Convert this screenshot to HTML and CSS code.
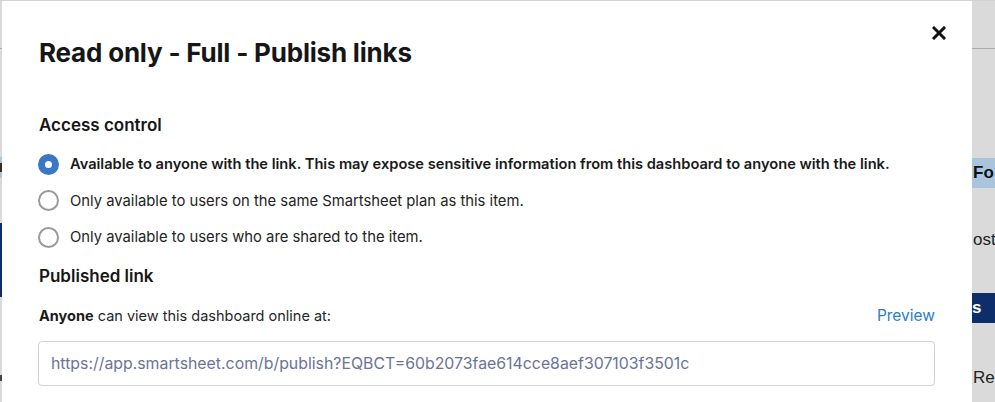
FILE: index.html
```html
<!DOCTYPE html>
<html lang="en">
<head>
<meta charset="utf-8">
<title>Publish links</title>
<link rel="stylesheet" href="styles.css">
</head>
<body>
<div class="page">
  <div class="side side-left">
    <div class="bar-top"></div>
    <div class="lb lb-left"><span class="mark"></span></div>
    <div class="navy navy-left"></div>
    <div class="dot-left"></div>
  </div>
  <div class="modal">
    <div class="modal-head">
      <h1 class="title">Read only - Full - Publish links</h1>
      <button class="close" aria-label="Close">
        <svg width="14" height="14" viewBox="0 0 14 14"><path d="M2 2 L12 12 M12 2 L2 12" stroke="#111" stroke-width="3" stroke-linecap="square"/></svg>
      </button>
    </div>
    <h2 class="section">Access control</h2>
    <div class="radios">
      <label class="radio checked"><span class="circle"></span><span class="rtext strong">Available to anyone with the link. This may expose sensitive information from this dashboard to anyone with the link.</span></label>
      <label class="radio"><span class="circle"></span><span class="rtext">Only available to users on the same Smartsheet plan as this item.</span></label>
      <label class="radio"><span class="circle"></span><span class="rtext">Only available to users who are shared to the item.</span></label>
    </div>
    <h2 class="section section-link">Published link</h2>
    <div class="link-row">
      <span class="desc"><b>Anyone</b> can view this dashboard online at:</span>
      <a class="preview" href="#">Preview</a>
    </div>
    <div class="url-box">https://app.smartsheet.com/b/publish?EQBCT=60b2073fae614cce8aef307103f3501c</div>
  </div>
  <div class="side side-right">
    <div class="bar-top"></div>
    <div class="lb lb-right">Fo</div>
    <div class="cell cell-ost">ost</div>
    <div class="navy navy-right">s</div>
    <div class="cell cell-rec">Rec</div>
  </div>
</div>
</body>
</html>
```

FILE: styles.css
```css
html, body {
  margin: 0;
  padding: 0;
  height: 100%;
  overflow: hidden;
}
body {
  background: #dcdcdc;
  font-family: Inter, "Liberation Sans", sans-serif;
  color: #1d1d1f;
}
.page {
  display: flex;
  height: 402px;
  border-top: 1px solid #d2d2d2;
  box-sizing: border-box;
}
.side {
  overflow: hidden;
  background: #dadada;
  font-family: "Liberation Sans", Arial, sans-serif;
}
.side-left {
  width: 2px;
  flex: none;
}
.side-right {
  flex: 1;
  white-space: nowrap;
}
.bar-top {
  height: 47px;
  border-bottom: 1px solid #ababab;
}
.lb {
  background: #a9c5de;
}
.lb-left {
  margin-top: 108px;
  height: 21px;
  display: flex;
  align-items: center;
}
.mark {
  display: block;
  width: 2px;
  height: 9px;
  background: #3a2a1a;
}
.navy {
  background: #0d2d6b;
}
.navy-left {
  margin-top: 45px;
  height: 74px;
}
.dot-left {
  margin-top: 78px;
  width: 2px;
  height: 6px;
  background: #444;
}
.lb-right {
  margin-top: 109px;
  height: 30px;
  line-height: 30px;
  font-weight: bold;
  font-size: 17px;
  color: #111;
  padding-left: 1px;
}
.cell {
  font-size: 17px;
  color: #222;
  padding-left: 1px;
}
.cell-ost {
  margin-top: 42px;
  height: 20px;
  line-height: 20px;
}
.navy-right {
  margin-top: 43px;
  height: 30px;
  line-height: 30px;
  color: #fff;
  font-weight: bold;
  font-size: 17px;
}
.cell-rec {
  margin-top: 45px;
  height: 20px;
  line-height: 20px;
}
.modal {
  width: 970px;
  flex: none;
  background: #fff;
  box-sizing: border-box;
  padding: 0 37px 0 36px;
}
.modal-head {
  display: flex;
  justify-content: space-between;
  align-items: flex-start;
}
.title {
  margin: 36px 0 0 1px;
  font-size: 26px;
  line-height: 32px;
  font-weight: 700;
  color: #161616;
  letter-spacing: -0.2px;
}
.close {
  margin: 25px -11px 0 0;
  border: 0;
  background: none;
  padding: 0;
  width: 14px;
  height: 14px;
  display: flex;
  align-items: center;
  justify-content: center;
}
.section {
  margin: 0 0 0 1px;
  font-size: 17px;
  font-weight: 600;
  color: #161616;
  line-height: 22px;
}
.modal-head + .section {
  margin-top: 45px;
}
.radios {
  display: flex;
  flex-direction: column;
  gap: 14.5px;
  margin-top: 17px;
}
.radio {
  display: flex;
  align-items: center;
  gap: 11px;
  height: 22px;
}
.circle {
  width: 21px;
  height: 21px;
  box-sizing: border-box;
  border-radius: 50%;
  border: 2px solid #9a9a9a;
  flex: none;
  background: #fff;
}
.radio.checked .circle {
  border: 7px solid #3a78c3;
  background: #fff;
}
.rtext {
  font-size: 14.8px;
  color: #232323;
}
.rtext.strong {
  font-size: 14.65px;
  font-weight: 600;
  color: #1a1a1a;
}
.section-link {
  margin-top: 17px;
}
.link-row {
  display: flex;
  justify-content: space-between;
  align-items: baseline;
  margin-top: 19px;
  font-size: 14.5px;
  line-height: 20px;
}
.desc {
  color: #262626;
  margin-left: 1px;
}
.desc b {
  font-weight: 700;
  color: #1a1a1a;
}
.preview {
  color: #2c7cc8;
  text-decoration: none;
  font-size: 15.5px;
}
.url-box {
  margin-top: 15px;
  height: 45px;
  box-sizing: border-box;
  border: 1px solid #d3d3d3;
  border-radius: 4px;
  padding: 0 12px;
  display: flex;
  align-items: center;
  font-size: 15.85px;
  color: #6a7495;
}
```
